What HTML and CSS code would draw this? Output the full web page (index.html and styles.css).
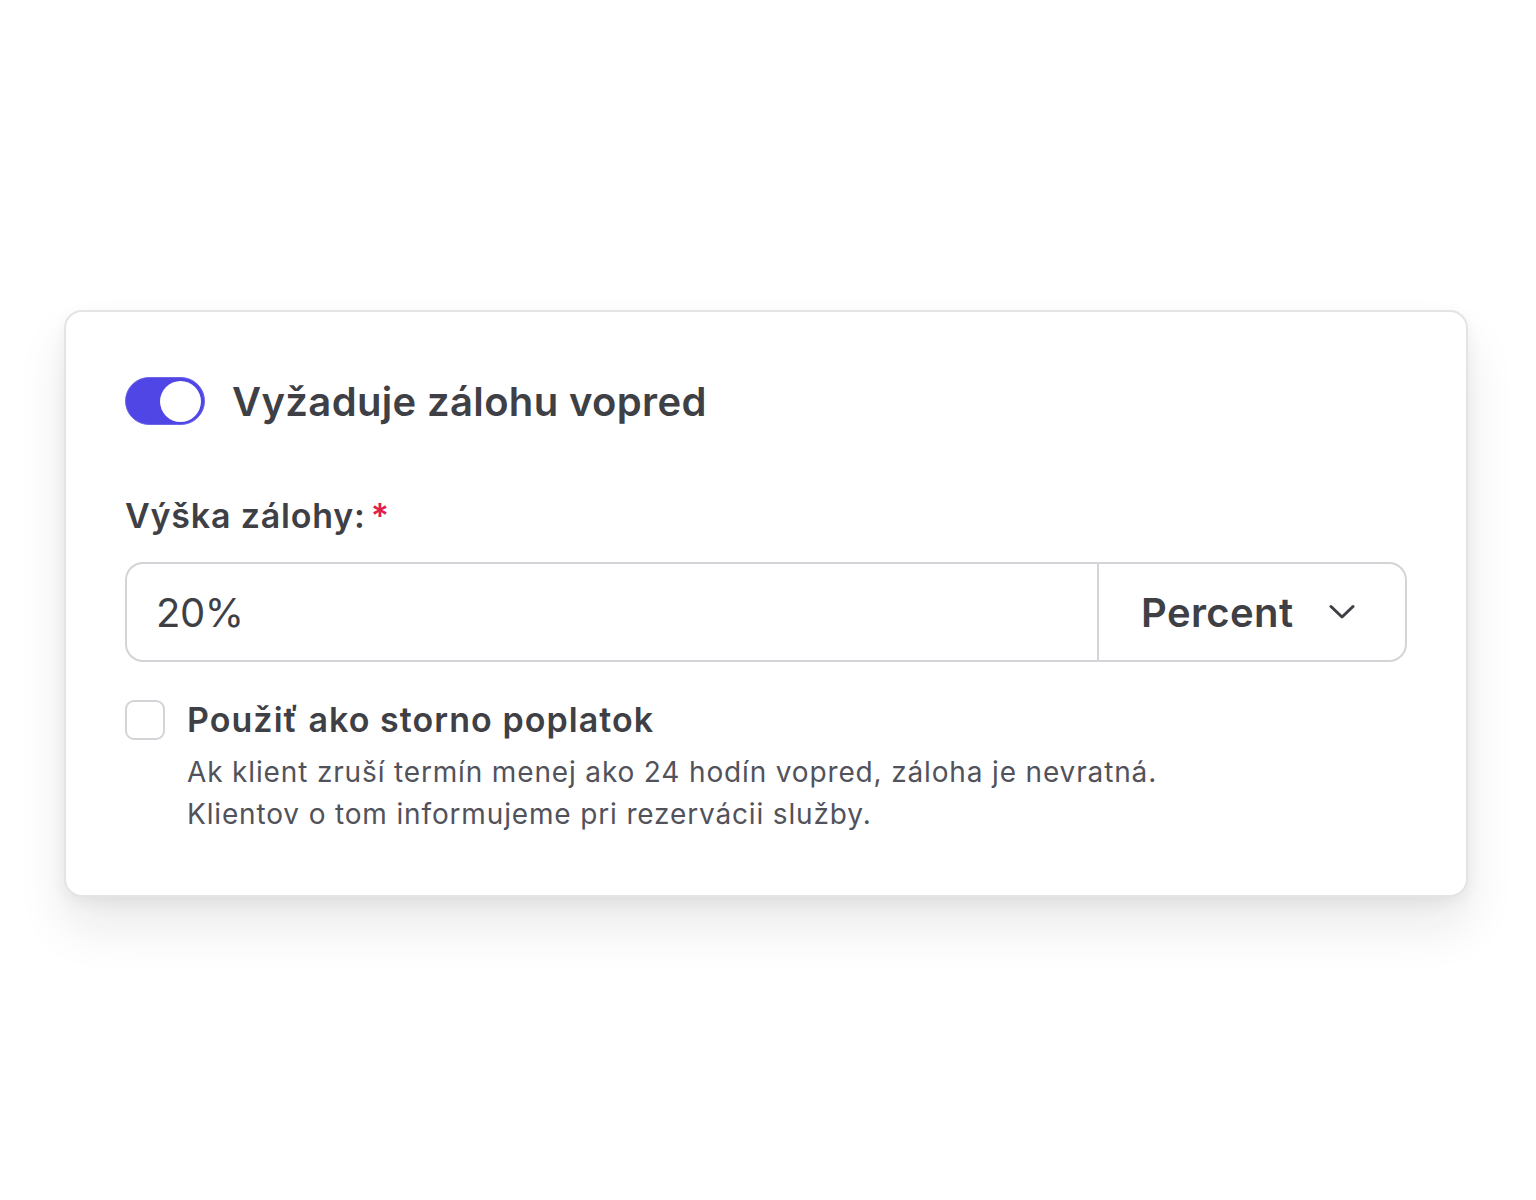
FILE: index.html
```html
<!DOCTYPE html>
<html lang="sk">
<head>
<meta charset="utf-8">
<title>Záloha</title>
<link rel="stylesheet" href="styles.css">
</head>
<body>
<div class="page">
  <div class="card">
    <div class="toggle-row">
      <span class="toggle"><span class="knob"></span></span>
      <span class="toggle-label">Vyžaduje zálohu vopred</span>
    </div>
    <div class="field-label">Výška zálohy:<span class="req">*</span></div>
    <div class="input-group">
      <div class="input-value">20%</div>
      <div class="select">
        <span class="select-text">Percent</span>
        <svg class="chev" width="26" height="16" viewBox="0 0 26 16"><path d="M2 2.5 L13 13 L24 2.5" fill="none" stroke="#3f3f46" stroke-width="3" stroke-linecap="round" stroke-linejoin="round"/></svg>
      </div>
    </div>
    <div class="check-row">
      <span class="checkbox"></span>
      <span class="check-label">Použiť ako storno poplatok</span>
    </div>
    <div class="desc">
      <div>Ak klient zruší termín menej ako 24 hodín vopred, záloha je nevratná.</div>
      <div>Klientov o tom informujeme pri rezervácii služby.</div>
    </div>
  </div>
</div>
</body>
</html>
```
FILE: styles.css
```css
html, body {
  margin: 0;
  background: #ffffff;
}
body {
  font-family: Inter, "Noto Sans", "Liberation Sans", sans-serif;
  color: #3f3f46;
}
.page {
  min-height: 1200px;
  box-sizing: border-box;
  padding: 310px 68px 200px 64px;
}
.card {
  width: 1404px;
  box-sizing: border-box;
  border: 2px solid #e4e4e7;
  border-radius: 18px;
  background: #fff;
  padding: 65px 59px 60px 59px;
  box-shadow: 0 30px 50px rgba(24, 24, 27, 0.09), 0 6px 16px rgba(24, 24, 27, 0.06);
}
.toggle-row {
  display: flex;
  align-items: center;
  gap: 27px;
  height: 48px;
}
.toggle {
  width: 80px;
  height: 48px;
  box-sizing: border-box;
  border-radius: 24px;
  background: #4f46e5;
  display: flex;
  align-items: center;
  justify-content: flex-end;
  padding-right: 3px;
  border: 1px solid #6d66e8;
}
.knob {
  width: 41px;
  height: 41px;
  border-radius: 50%;
  background: #fff;
}
.toggle-label {
  font-size: 40px;
  font-weight: 600;
  letter-spacing: 0.35px;
  color: #3f3f46;
}
.field-label {
  margin-top: 71px;
  font-size: 34px;
  line-height: 40px;
  font-weight: 600;
  letter-spacing: 0.8px;
  color: #3f3f46;
}
.req {
  color: #e11d48;
  margin-left: 5px;
}
.input-group {
  margin-top: 26px;
  height: 100px;
  box-sizing: border-box;
  border: 2px solid #d4d4d8;
  border-radius: 18px;
  display: flex;
}
.input-value {
  flex: 1;
  display: flex;
  align-items: center;
  padding-left: 29px;
  font-size: 40px;
  font-weight: 400;
  letter-spacing: -0.5px;
  color: #3f3f46;
  border-right: 2px solid #d4d4d8;
}
.select {
  width: 306px;
  box-sizing: border-box;
  display: flex;
  align-items: center;
  padding-left: 42px;
  gap: 35px;
}
.select-text {
  font-size: 40px;
  font-weight: 600;
  letter-spacing: 0.4px;
  color: #3f3f46;
}
.chev {
  display: block;
}
.check-row {
  margin-top: 38px;
  display: flex;
  align-items: center;
  gap: 22px;
}
.checkbox {
  width: 40px;
  height: 40px;
  box-sizing: border-box;
  border: 2px solid #d4d4d8;
  border-radius: 9px;
  background: #fff;
}
.check-label {
  font-size: 34px;
  line-height: 40px;
  font-weight: 600;
  letter-spacing: 1.05px;
  color: #3f3f46;
}
.desc {
  margin-top: 11px;
  margin-left: 62px;
  font-size: 28px;
  line-height: 42px;
  letter-spacing: 0.85px;
  color: #52525b;
}
```
